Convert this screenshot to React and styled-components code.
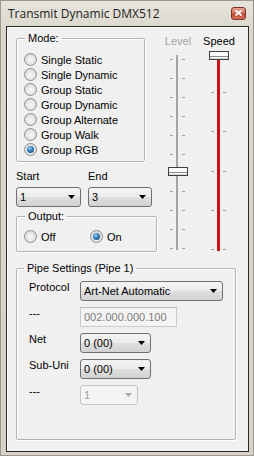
import styled, { createGlobalStyle } from "styled-components";

const GlobalStyle = createGlobalStyle`
  html, body {
    margin: 0;
    padding: 0;
    background: #d8d5c8;
  }
  body {
    font-family: "Liberation Sans", Arial, sans-serif;
    font-size: 11px;
    color: #000;
  }
`;

const Window = styled.div`
  width: 254px;
  height: 456px;
  box-sizing: border-box;
  border: 1px solid #9c998c;
  background: linear-gradient(#e6e4dc 0px, #dad7cb 30px, #d6d3c6 100%);
  display: flex;
  flex-direction: column;
`;

const TitleBar = styled.div`
  height: 25px;
  flex: none;
  display: flex;
  align-items: center;
  justify-content: space-between;
  padding: 0 7px 0 7px;
  box-sizing: border-box;

  h1 {
    margin: 0;
    font-family: "Open Sans", "Liberation Sans", sans-serif;
    font-size: 12px;
    font-weight: 400;
    color: #1e1e1e;
    padding-bottom: 1px;
  }
`;

const CloseButton = styled.button`
  width: 15px;
  height: 13px;
  padding: 0;
  border: 1px solid #7c3326;
  border-radius: 3px;
  background: linear-gradient(#e7a595 0%, #d5705b 45%, #c0462f 55%, #d0725a 100%);
  display: flex;
  align-items: center;
  justify-content: center;
  margin-bottom: 1px;

  svg {
    display: block;
  }
`;

const Client = styled.div`
  flex: 1;
  margin: 0 4px 3px 5px;
  border: 1px solid #2b2b2b;
  background: #f0f0f0;
  box-shadow: inset 1px 1px 0 #fff;
  padding: 5px 0 0 9px;
  display: flex;
  flex-direction: column;
`;

const TopSection = styled.div`
  display: flex;
  gap: 6px;
`;

const LeftColumn = styled.div`
  width: 141px;
  display: flex;
  flex-direction: column;
`;

const GroupBox = styled.fieldset`
  margin: ${(p) => p.$mt || 0}px 0 0 0;
  padding: 0;
  min-width: 0;
  width: ${(p) => p.$w}px;
  height: ${(p) => p.$h}px;
  box-sizing: border-box;
  border: 1px solid #b4b4b4;
  border-radius: 2px;
  box-shadow: 1px 1px 0 #fff, inset 1px 1px 0 #fff;

  legend {
    margin-left: ${(p) => p.$lm ?? 8}px;
    padding: 0 3px;
    line-height: 13px;
    color: #000;
  }
`;

const GroupBody = styled.div`
  padding: ${(p) => p.$pt || 6}px 0 0 ${(p) => p.$pl || 7}px;
`;

const RadioList = styled.div`
  display: flex;
  flex-direction: ${(p) => (p.$row ? "row" : "column")};
`;

const RadioItem = styled.label`
  display: flex;
  align-items: center;
  gap: 4px;
  height: 15px;
  width: ${(p) => (p.$w ? `${p.$w}px` : "auto")};
  white-space: nowrap;
`;

const RadioDot = styled.span`
  width: 13px;
  height: 13px;
  flex: none;
  box-sizing: border-box;
  border-radius: 50%;
  border: 1px solid #8e8f8f;
  background: radial-gradient(circle at 50% 55%, #f7f7f7 0%, #e8e8e8 45%, #c9c9c9 100%);
  display: flex;
  align-items: center;
  justify-content: center;

  &::after {
    content: "";
    display: ${(p) => (p.$checked ? "block" : "none")};
    width: 7px;
    height: 7px;
    border-radius: 50%;
    background: radial-gradient(circle at 40% 35%, #9fd6f6 0%, #2f7ab4 45%, #123f66 100%);
  }
`;

const PairRow = styled.div`
  display: flex;
  gap: 7px;
  margin-top: 8px;
`;

const Field = styled.div`
  display: flex;
  flex-direction: column;
  gap: 4px;

  span {
    line-height: 13px;
  }
`;

const Combo = styled.div`
  width: ${(p) => p.$w}px;
  height: 20px;
  flex: none;
  box-sizing: border-box;
  border: 1px solid ${(p) => (p.$disabled ? "#c2c4c6" : "#707070")};
  border-radius: 3px;
  background: ${(p) =>
    p.$disabled
      ? "#f4f4f4"
      : "linear-gradient(#f3f3f3 0%, #ececec 50%, #dfdfdf 51%, #d2d2d2 100%)"};
  color: ${(p) => (p.$disabled ? "#a0a0a0" : "#000")};
  display: flex;
  align-items: center;
  justify-content: space-between;
  padding: 0 5px 0 3px;

  svg {
    display: block;
  }
`;

const TextBox = styled.div`
  width: ${(p) => p.$w}px;
  height: 20px;
  box-sizing: border-box;
  border: 1px solid #c9cbcd;
  border-top-color: #b5b7b9;
  background: #f4f4f4;
  color: #7d7d7d;
  display: flex;
  align-items: center;
  padding: 0 3px;
`;

const Sliders = styled.div`
  display: flex;
  gap: 11px;
  padding-top: 3px;
`;

const SliderColumn = styled.div`
  width: 30px;
  display: flex;
  flex-direction: column;
  align-items: center;
  gap: 2px;

  span {
    line-height: 13px;
    color: ${(p) => (p.$dim ? "#a3a3a3" : "#000")};
  }
`;

const PipeRows = styled.div`
  display: flex;
  flex-direction: column;
  gap: 6px;
`;

const PipeRow = styled.div`
  display: flex;
  align-items: flex-start;

  > span {
    width: 51px;
    line-height: 13px;
  }
`;

function Arrow({ disabled }) {
  return (
    <svg width="7" height="4" viewBox="0 0 7 4">
      <path d="M0 0H7L3.5 4Z" fill={disabled ? "#a8a8a8" : "#000"} />
    </svg>
  );
}

function Radio({ label, checked, w }) {
  return (
    <RadioItem $w={w}>
      <RadioDot $checked={checked} />
      {label}
    </RadioItem>
  );
}

function Slider({ label, dim, ticks, step, tickTop, trackTop, trackBottom, trackColor, trackWidth, thumbY }) {
  const marks = Array.from({ length: ticks }, (_, i) => Math.round(tickTop + i * step));
  return (
    <SliderColumn $dim={dim}>
      <span>{label}</span>
      <svg width="30" height="206" viewBox="0 0 30 206">
        <rect x="13" y={trackTop} width={trackWidth} height={trackBottom - trackTop} fill={trackColor} />
        {marks.map((y) => (
          <g key={y} fill="#9d9d9d">
            <rect x="7" y={y} width="3" height="1" />
            <rect x="19" y={y} width="3" height="1" />
          </g>
        ))}
        <rect x="5.5" y={thumbY + 0.5} width="19" height="8" fill="#fbfbfb" stroke="#3f3f3f" />
        <line x1="6" x2="24" y1={thumbY + 5.5} y2={thumbY + 5.5} stroke="#8a8a8a" />
        <line x1="6" x2="24" y1={thumbY + 7.5} y2={thumbY + 7.5} stroke="#d6d6d6" />
      </svg>
    </SliderColumn>
  );
}

const modes = [
  "Single Static",
  "Single Dynamic",
  "Group Static",
  "Group Dynamic",
  "Group Alternate",
  "Group Walk",
  "Group RGB",
];

export default function App() {
  return (
    <>
      <GlobalStyle />
      <Window>
        <TitleBar>
          <h1>Transmit Dynamic DMX512</h1>
          <CloseButton aria-label="Close">
            <svg width="7" height="6" viewBox="0 0 7 6">
              <path d="M0.5 0.5L6.5 5.5M6.5 0.5L0.5 5.5" stroke="#fff" strokeWidth="1.8" />
            </svg>
          </CloseButton>
        </TitleBar>
        <Client>
          <TopSection>
            <LeftColumn>
              <GroupBox $w={129} $h={130}>
                <legend>Mode:</legend>
                <GroupBody $pt={7}>
                  <RadioList>
                    {modes.map((m) => (
                      <Radio key={m} label={m} checked={m === "Group RGB"} />
                    ))}
                  </RadioList>
                </GroupBody>
              </GroupBox>
              <PairRow>
                <Field>
                  <span>Start</span>
                  <Combo $w={65}>
                    1
                    <Arrow />
                  </Combo>
                </Field>
                <Field>
                  <span>End</span>
                  <Combo $w={64}>
                    3
                    <Arrow />
                  </Combo>
                </Field>
              </PairRow>
              <GroupBox $w={141} $h={42} $mt={3}>
                <legend>Output:</legend>
                <GroupBody $pt={6}>
                  <RadioList $row>
                    <Radio label="Off" w={66} />
                    <Radio label="On" checked />
                  </RadioList>
                </GroupBody>
              </GroupBox>
            </LeftColumn>
            <Sliders>
              <Slider
                label="Level"
                dim
                ticks={11}
                step={18.9}
                tickTop={9}
                trackTop={5}
                trackBottom={200}
                trackColor="#a4a4a4"
                trackWidth={2}
                thumbY={117}
              />
              <Slider
                label="Speed"
                ticks={6}
                step={39.2}
                tickTop={3}
                trackTop={9}
                trackBottom={201}
                trackColor="#c81414"
                trackWidth={3}
                thumbY={1}
              />
            </Sliders>
          </TopSection>
          <GroupBox $w={220} $h={178} $mt={6} $lm={7}>
            <legend>Pipe Settings (Pipe 1)</legend>
            <GroupBody $pt={6} $pl={12}>
              <PipeRows>
                <PipeRow>
                  <span>Protocol</span>
                  <Combo $w={143}>
                    Art-Net Automatic
                    <Arrow />
                  </Combo>
                </PipeRow>
                <PipeRow>
                  <span>---</span>
                  <TextBox $w={97}>002.000.000.100</TextBox>
                </PipeRow>
                <PipeRow>
                  <span>Net</span>
                  <Combo $w={71}>
                    0 (00)
                    <Arrow />
                  </Combo>
                </PipeRow>
                <PipeRow>
                  <span>Sub-Uni</span>
                  <Combo $w={71}>
                    0 (00)
                    <Arrow />
                  </Combo>
                </PipeRow>
                <PipeRow>
                  <span>---</span>
                  <Combo $w={58} $disabled>
                    1
                    <Arrow disabled />
                  </Combo>
                </PipeRow>
              </PipeRows>
            </GroupBody>
          </GroupBox>
        </Client>
      </Window>
    </>
  );
}
